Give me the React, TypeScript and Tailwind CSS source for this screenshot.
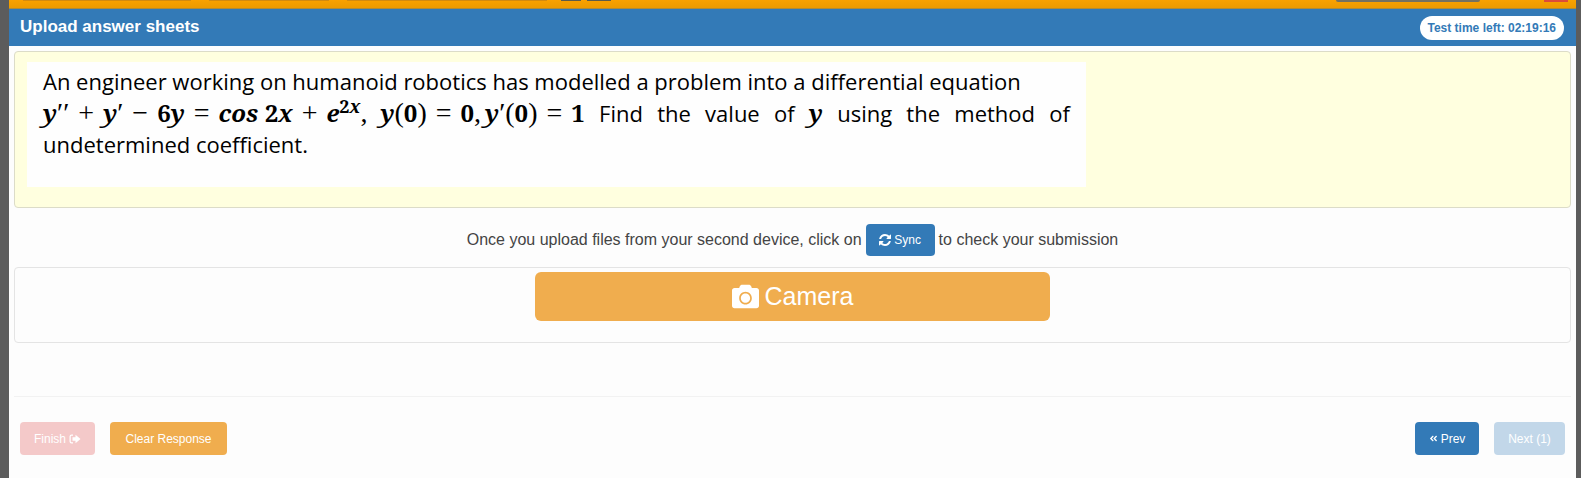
import type { ReactNode } from "react";
import { FaCamera, FaAngleDoubleLeft } from "react-icons/fa";

const actionButton =
  "rounded px-3 text-xs text-white flex items-center justify-center gap-[3px]";

const SyncIcon = () => (
  <svg viewBox="0 0 1536 1536" className="size-3 fill-current" aria-hidden="true">
    <path d="M1511 928q0 5-1 7-64 268-268 434.500T764 1536q-146 0-282.500-55T238 1324l-129 129q-19 19-45 19t-45-19-19-45V960q0-26 19-45t45-19h448q26 0 45 19t19 45-19 45l-137 137q71 66 161 102t187 36q134 0 250-65t186-179q11-17 53-117 8-23 30-23h192q13 0 22.500 9.500t9.500 22.500zm25-800v448q0 26-19 45t-45 19h-448q-26 0-45-19t-19-45 19-45l138-138Q969 256 768 256q-134 0-250 65T332 500q-11 17-53 117-8 23-30 23H50q-13 0-22.500-9.500T18 608v-7q65-268 270-434.500T768 0q146 0 284 55.500T1297 212l130-129q19-19 45-19t45 19 19 45z" />
  </svg>
);

const FinishIcon = () => (
  <svg viewBox="0 0 24 24" className="size-3 fill-current" aria-hidden="true">
    <path d="M8 3H5a4 4 0 0 0-4 4v10a4 4 0 0 0 4 4h3v-2.500H5A1.500 1.500 0 0 1 3.500 17V7A1.500 1.500 0 0 1 5 5.500h3z" />
    <path d="M7 8.500h6V3.500L23 12l-10 8.500v-5H7z" />
  </svg>
);

// Sliver of the site header that stays visible above the dialog
const HeaderStrip = () => (
  <div className="flex h-[9px] items-start border-b border-[#b08a35] bg-linear-to-b from-[#f9a100] to-[#ec9a00]">
    <div className="ml-[14px] h-px w-[168px] bg-[#d18a10]" />
    <div className="ml-[18px] h-px w-[120px] bg-[#d18a10]" />
    <div className="ml-[18px] h-px w-[200px] bg-[#d18a10]" />
    <div className="ml-[14px] h-px w-5 bg-[#5b5b4a]" />
    <div className="ml-[6px] h-px w-6 bg-[#5b5b4a]" />
    <div className="ml-auto h-[2px] w-[144px] rounded-b bg-[#75715f]" />
    <div className="mr-2 ml-16 h-[2px] w-6 bg-[#dd4b39]" />
  </div>
);

// Operators, brackets and primes are set upright and light
const Op = ({ children }: { children: ReactNode }) => (
  <span className="font-['Liberation_Serif',serif] text-[28px] font-normal not-italic">{children}</span>
);

const Num = ({ children }: { children: ReactNode }) => (
  <span className="not-italic">{children}</span>
);

const Equation = () => (
  <span className="flex gap-[9px] font-['Noto_Serif','Liberation_Serif',serif] text-2xl leading-[31px] font-bold italic">
    <span>y<Op>′′</Op></span>
    <Op>+</Op>
    <span>y<Op>′</Op></span>
    <Op>−</Op>
    <span><Num>6</Num>y</span>
    <Op>=</Op>
    <span>cos <Num>2</Num>x</span>
    <Op>+</Op>
    <span className="mr-1">
      e<sup className="text-lg leading-none"><Num>2</Num>x</sup><Op>,</Op>
    </span>
    <span>y<Op>(</Op><Num>0</Num><Op>)</Op></span>
    <Op>=</Op>
    <span className="flex gap-1">
      <span><Num>0</Num><Op>,</Op></span>
      <span>y<Op>′(</Op><Num>0</Num><Op>)</Op></span>
    </span>
    <Op>=</Op>
    <Num>1</Num>
  </span>
);

export default function App() {
  return (
    <div className="min-h-screen bg-[#5c5c5c] pr-[5px] pl-[9px] font-['Liberation_Sans',Arial,sans-serif] text-[#444]">
      <div className="flex min-h-screen flex-col bg-[#fdfdfd]">
        <HeaderStrip />
        <header className="flex h-[37px] items-center justify-between bg-[#337ab7] pr-3 pl-[11px]">
          <h1 className="pb-px text-[17px] leading-6 font-bold text-white">Upload answer sheets</h1>
          <span className="rounded-full bg-white px-2 py-1 text-xs leading-4 font-bold text-[#337ab7]">
            Test time left: 02:19:16
          </span>
        </header>

        <main className="px-[5px] pt-[5px]">
          <section className="rounded border border-[#dcdcc8] bg-[#ffffdf] px-3 pt-[10px] pb-5">
            <div className="h-[125px] w-[1059px] max-w-full bg-[#fefefe] px-4 pt-1 font-['Open_Sans',sans-serif] text-[22px] leading-[31px] text-black">
              <p>
                An engineer working on humanoid robotics has modelled a problem into a differential equation
              </p>
              <p className="flex h-8 items-baseline justify-between">
                <Equation />
                <span>Find</span>
                <span>the</span>
                <span>value</span>
                <span>of</span>
                <span className="font-['Noto_Serif','Liberation_Serif',serif] text-2xl leading-[31px] font-bold italic">y</span>
                <span>using</span>
                <span>the</span>
                <span>method</span>
                <span>of</span>
              </p>
              <p>undetermined coefficient.</p>
            </div>
          </section>

          <div className="flex h-[59px] items-center justify-center gap-1 pt-1 text-base">
            <span>Once you upload files from your second device, click on</span>
            <button type="button" className={`${actionButton} h-8 w-[69px] bg-[#337ab7]`}>
              <SyncIcon />
              Sync
            </button>
            <span>to check your submission</span>
          </div>

          <section className="flex h-[76px] justify-center rounded border border-[#e4e4e4] px-[5px] pt-1">
            <button
              type="button"
              className="flex h-[49px] w-1/3 items-center justify-center gap-[6px] rounded-md bg-[#f0ad4e] text-[25px] text-white"
            >
              <FaCamera className="size-[27px]" />
              Camera
            </button>
          </section>
        </main>

        <footer className="mx-[5px] mt-[53px] flex items-center justify-between border-t border-[#f2f2f2] px-[6px] pt-[25px]">
          <div className="flex gap-[15px]">
            <button type="button" disabled className={`${actionButton} h-[33px] w-[75px] bg-[#f4c9c9]`}>
              Finish
              <FinishIcon />
            </button>
            <button type="button" className={`${actionButton} h-[33px] w-[117px] bg-[#f0ad4e]`}>
              Clear Response
            </button>
          </div>
          <div className="flex gap-[15px]">
            <button type="button" className={`${actionButton} h-[33px] w-16 bg-[#337ab7]`}>
              <FaAngleDoubleLeft className="size-[9px]" />
              Prev
            </button>
            <button type="button" disabled className={`${actionButton} h-[33px] w-[71px] bg-[#c2d7e9]`}>
              Next (1)
            </button>
          </div>
        </footer>
      </div>
    </div>
  );
}
